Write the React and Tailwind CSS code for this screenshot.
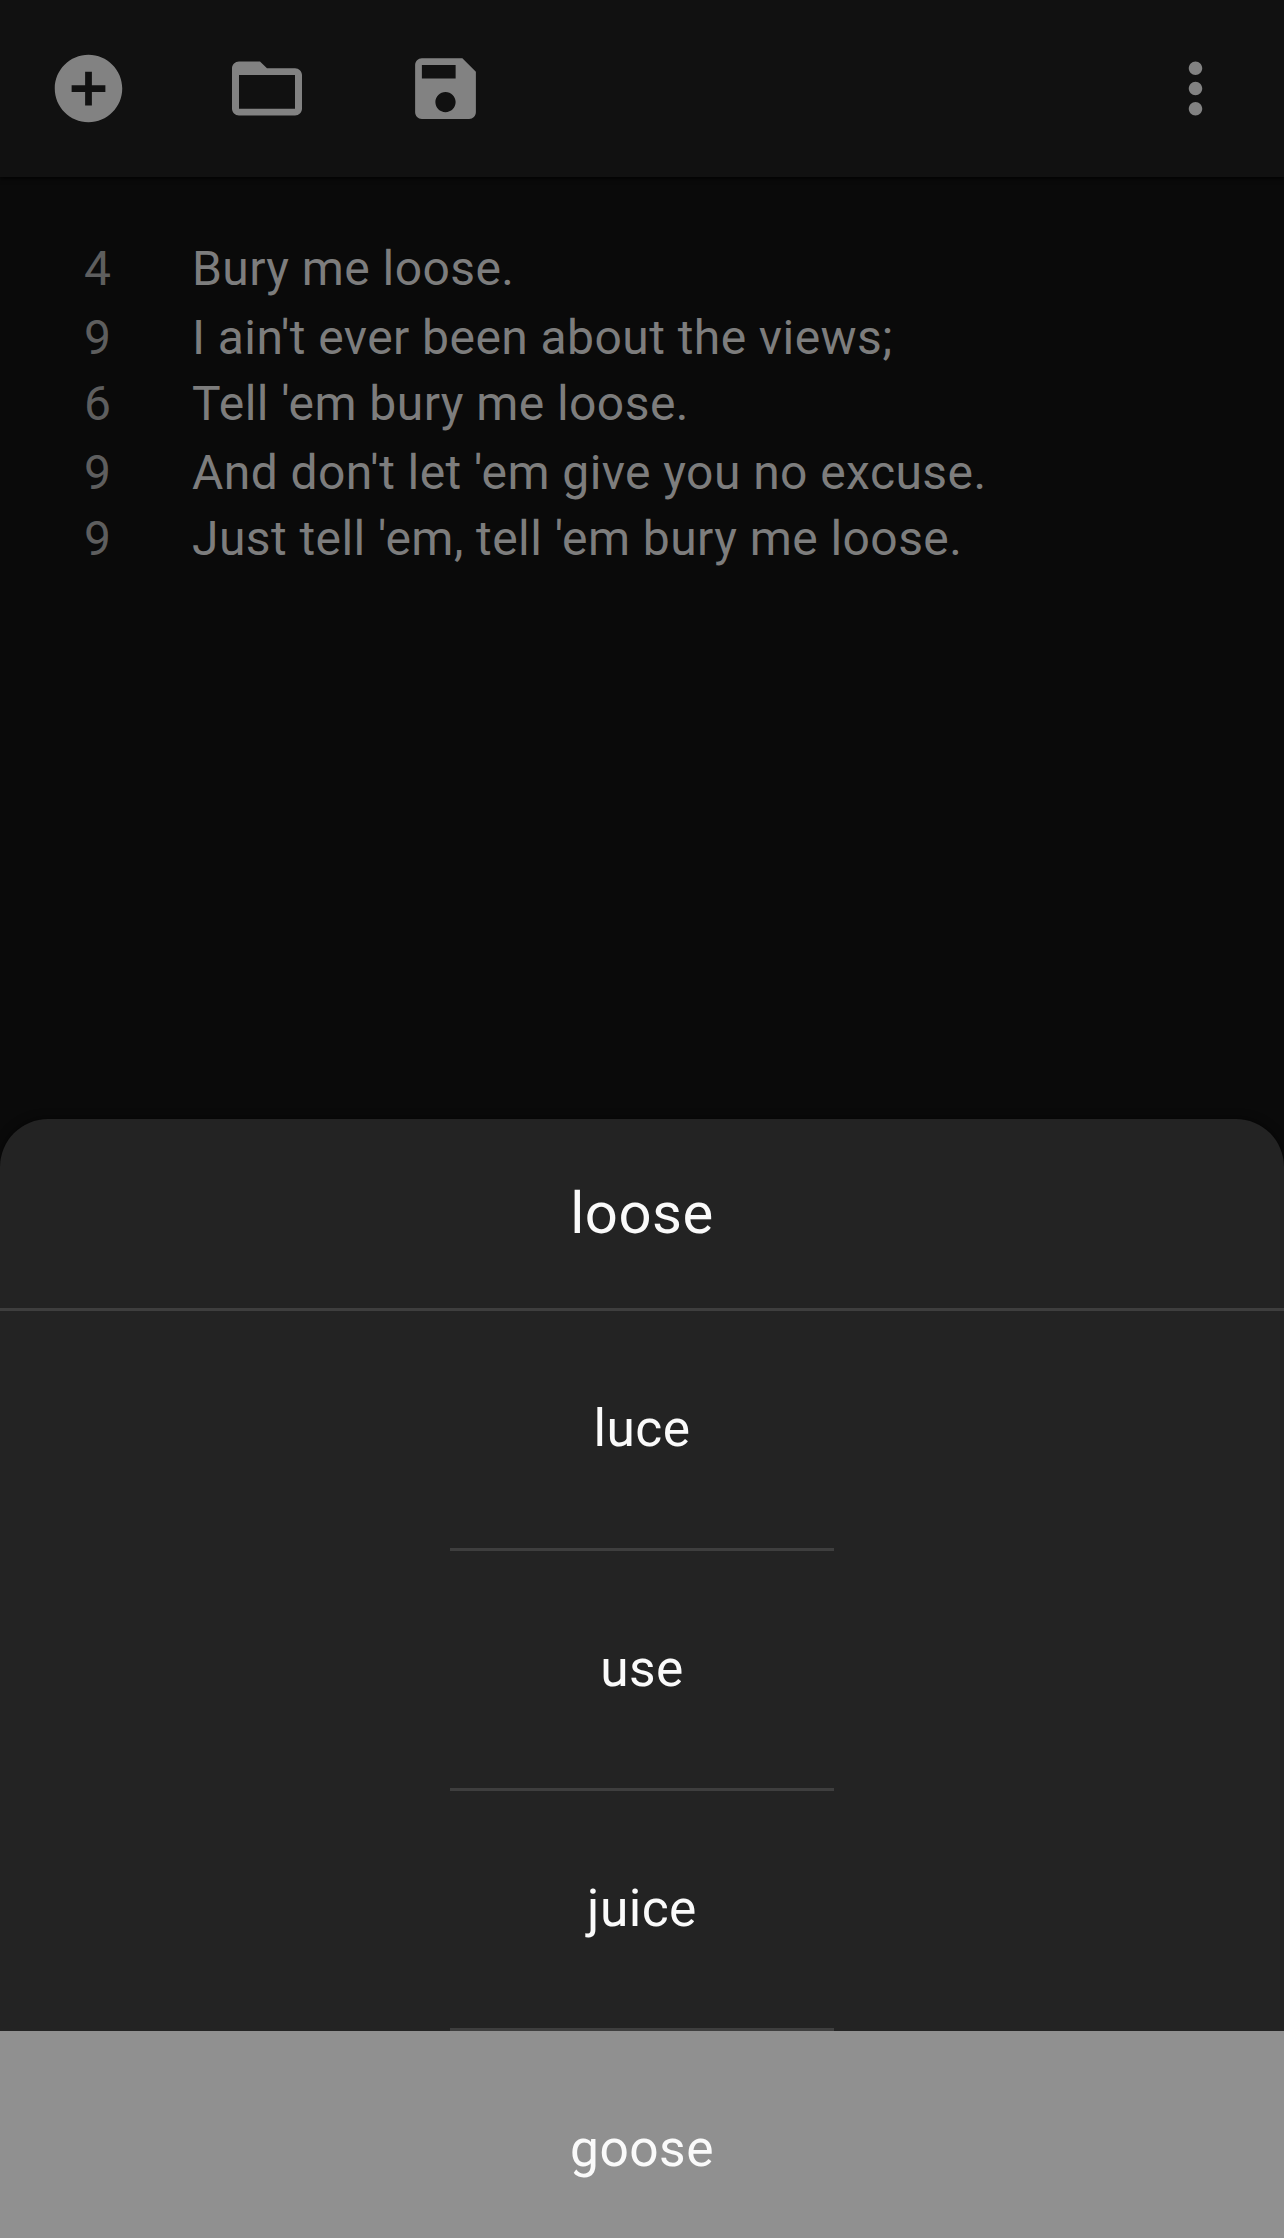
const lines = [
  [4, 'Bury me loose.'],
  [9, "I ain't ever been about the views;"],
  [6, "Tell 'em bury me loose."],
  [9, "And don't let 'em give you no excuse."],
  [9, "Just tell 'em, tell 'em bury me loose."],
];
const rhymes = ['luce', 'use', 'juice'];

function Icon({ d, wide }) {
  return (
    <svg
      viewBox="0 0 24 24"
      preserveAspectRatio="none"
      className={wide ? 'h-[81px] w-[84px] fill-[#828282]' : 'size-[81px] fill-[#828282]'}
    >
      <path d={d} />
    </svg>
  );
}

export default function App() {
  return (
    <div className="flex h-[2238px] w-[1284px] flex-col overflow-hidden bg-[#0a0a0a] font-['Roboto',sans-serif]">
      <header className="flex h-[177px] shrink-0 items-center bg-[#111111] px-12 shadow-[0_1px_5px_#000]">
        <div className="flex flex-1 gap-24">
          <Icon d="M12 2C6.48 2 2 6.48 2 12s4.48 10 10 10 10-4.48 10-10S17.52 2 12 2zm5 11h-4v4h-2v-4H7v-2h4V7h2v4h4v2z" />
          <Icon wide d="M20 6h-8l-2-2H4c-1.1 0-2 .9-2 2v12c0 1.1.9 2 2 2h16c1.1 0 2-.9 2-2V8c0-1.1-.9-2-2-2zm0 12H4V8h16v10z" />
          <Icon d="M17 3H5c-1.11 0-2 .9-2 2v14c0 1.1.89 2 2 2h14c1.1 0 2-.9 2-2V7l-4-4zm-5 16c-1.66 0-3-1.34-3-3s1.34-3 3-3 3 1.34 3 3-1.34 3-3 3zm3-10H5V5h10v4z" />
        </div>
        <Icon d="M12 8c1.1 0 2-.9 2-2s-.9-2-2-2-2 .9-2 2 .9 2 2 2zm0 2c-1.1 0-2 .9-2 2s.9 2 2 2 2-.9 2-2-.9-2-2-2zm0 6c-1.1 0-2 .9-2 2s.9 2 2 2 2-.9 2-2-.9-2-2-2z" />
      </header>
      <main className="flex-1 pt-[59px] text-[48px] leading-[65px] tracking-[0.43px] text-[#7d7d7d]">
        {lines.map(([n, text], i) => (
          <div key={i} className="flex odd:mb-1 even:mb-px">
            <span className="w-[192px] pl-[84px] text-[#5e5e5e]">{n}</span>
            <span className="whitespace-nowrap">{text}</span>
          </div>
        ))}
      </main>
      <section className="flex h-[1119px] shrink-0 flex-col rounded-t-[48px] bg-[#232323] text-center text-[51.5px] tracking-[0.45px] text-[#fafafa] shadow-[0_0_10px_#0008]">
        <h1 className="h-[192px] shrink-0 border-b-3 border-[#3e3e3e] text-[58px] leading-[188px] tracking-[0.5px]">loose</h1>
        {rhymes.map((word) => (
          <div key={word} className="flex h-[240px] shrink-0 flex-col items-center">
            <div className="h-[237px] leading-[235px]">{word}</div>
            <div className="h-[3px] w-[384px] bg-[#3e3e3e]" />
          </div>
        ))}
        <div className="h-[207px] shrink-0 bg-[#909090] leading-[235px]">goose</div>
      </section>
    </div>
  );
}
